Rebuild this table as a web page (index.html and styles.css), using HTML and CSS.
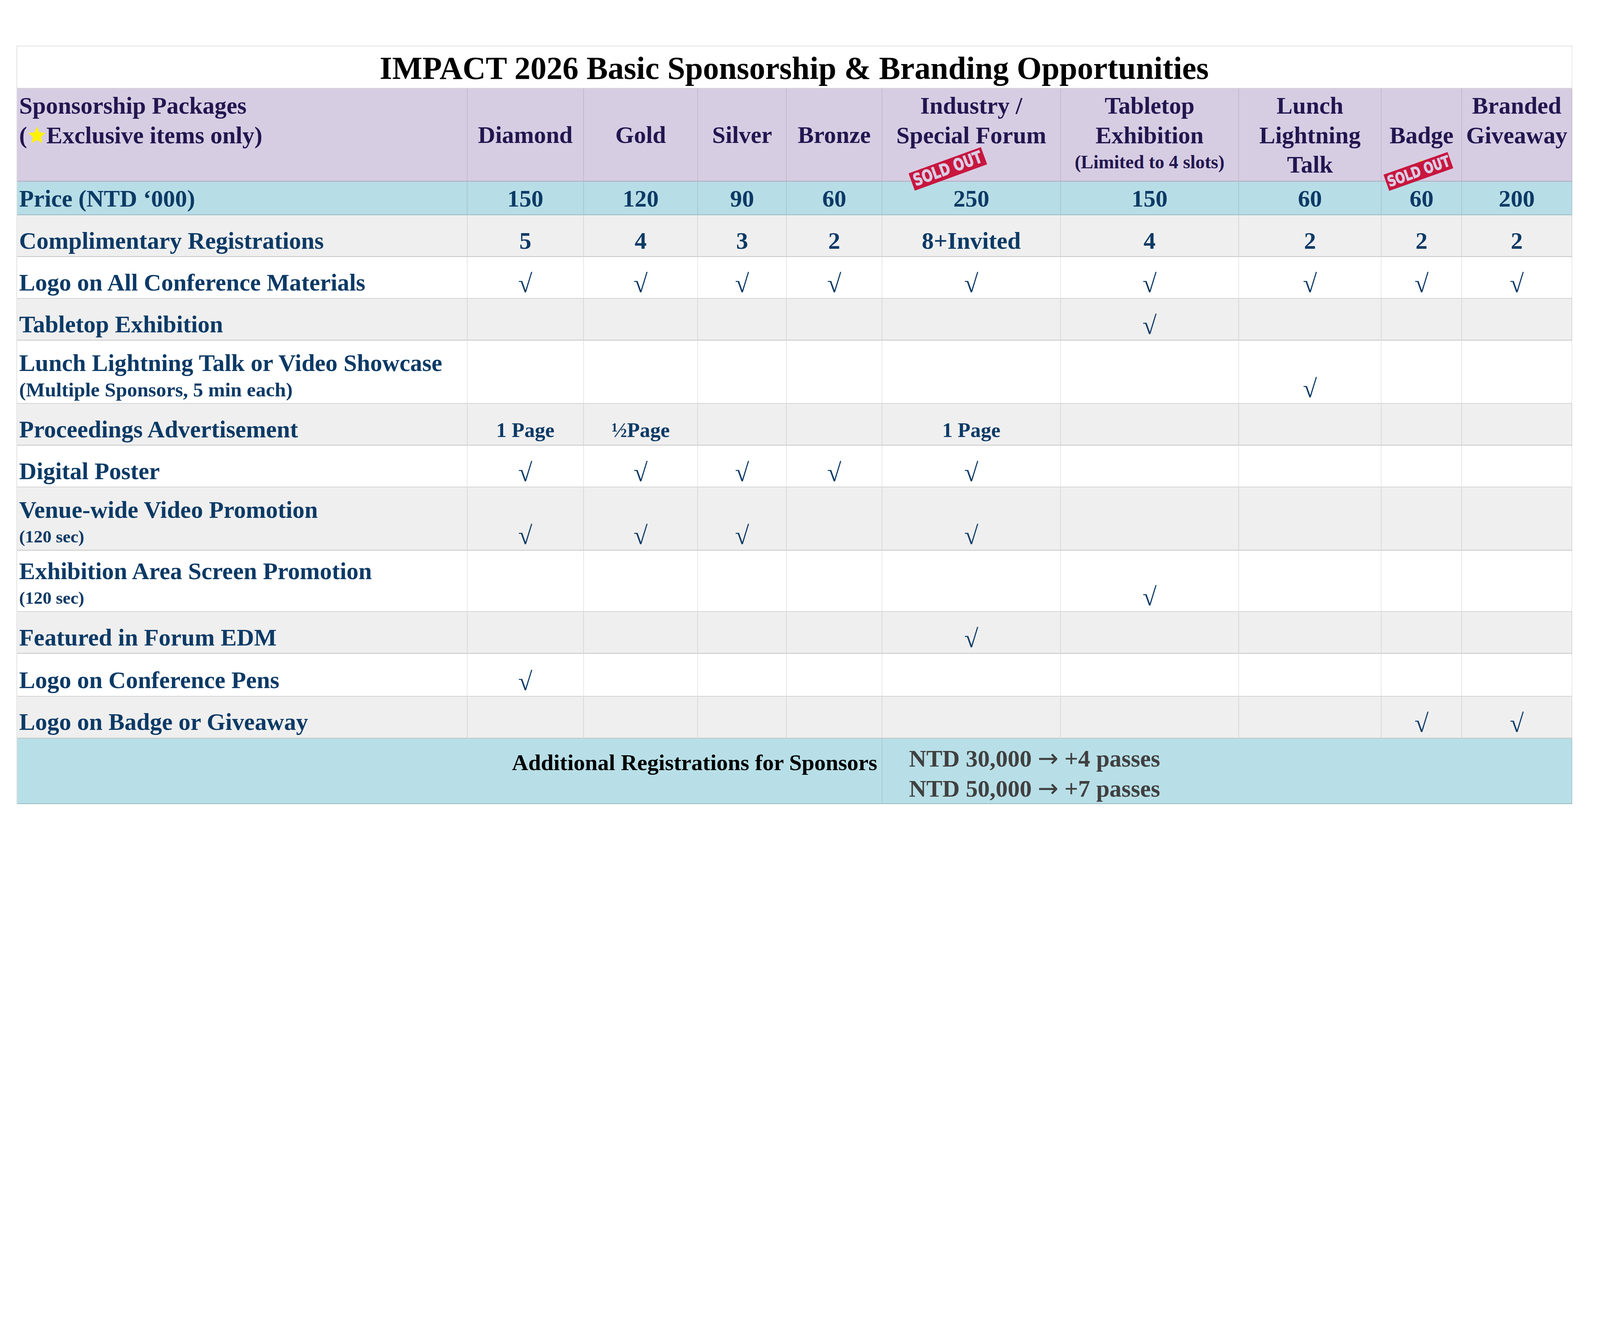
FILE: index.html
```html
<!DOCTYPE html>
<html lang="en">
<head>
<meta charset="utf-8">
<title>IMPACT 2026 Basic Sponsorship &amp; Branding Opportunities</title>
<link rel="stylesheet" href="styles.css">
</head>
<body>
<div class="page">
  <div class="sheet">
    <div class="row white">
      <div class="c title">IMPACT 2026 Basic Sponsorship &amp; Branding Opportunities</div>
    </div>

    <div class="row head">
      <div class="c hd lbl">
        <div class="ln">Sponsorship Packages</div>
        <div class="ln">(<svg class="star" viewBox="0 0 24 24"><path d="M12 1.2l3.15 7.05 7.65.75-5.8 5.1 1.7 7.6L12 17.8l-6.7 3.9 1.7-7.6-5.8-5.1 7.65-.75z"/></svg>Exclusive items only)</div>
      </div>
      <div class="c hd mid"><div class="ln">Diamond</div></div>
      <div class="c hd mid"><div class="ln">Gold</div></div>
      <div class="c hd mid"><div class="ln">Silver</div></div>
      <div class="c hd mid"><div class="ln">Bronze</div></div>
      <div class="c hd">
        <div class="ln">Industry /</div>
        <div class="ln">Special Forum</div>
      </div>
      <div class="c hd">
        <div class="ln">Tabletop</div>
        <div class="ln">Exhibition</div>
        <div class="ln lim">(Limited to 4 slots)</div>
      </div>
      <div class="c hd">
        <div class="ln">Lunch</div>
        <div class="ln">Lightning</div>
        <div class="ln">Talk</div>
      </div>
      <div class="c hd">
        <div class="ln">&nbsp;</div>
        <div class="ln">Badge</div>
        <div class="ln starln"><svg class="star star2" viewBox="0 0 24 24"><path d="M12 1.2l3.15 7.05 7.65.75-5.8 5.1 1.7 7.6L12 17.8l-6.7 3.9 1.7-7.6-5.8-5.1 7.65-.75z"/></svg></div>
      </div>
      <div class="c hd">
        <div class="ln">Branded</div>
        <div class="ln">Giveaway</div>
      </div>
    </div>

    <div class="row blue">
      <div class="c lbl">Price (NTD ‘000)</div>
      <div class="c">150</div>
      <div class="c">120</div>
      <div class="c">90</div>
      <div class="c">60</div>
      <div class="c">250</div>
      <div class="c">150</div>
      <div class="c">60</div>
      <div class="c">60</div>
      <div class="c">200</div>
    </div>

    <div class="row gray">
      <div class="c lbl">Complimentary Registrations</div>
      <div class="c">5</div>
      <div class="c">4</div>
      <div class="c">3</div>
      <div class="c">2</div>
      <div class="c">8+Invited</div>
      <div class="c">4</div>
      <div class="c">2</div>
      <div class="c">2</div>
      <div class="c">2</div>
    </div>

    <div class="row white">
      <div class="c lbl">Logo on All Conference Materials</div>
      <div class="c ck">√</div>
      <div class="c ck">√</div>
      <div class="c ck">√</div>
      <div class="c ck">√</div>
      <div class="c ck">√</div>
      <div class="c ck">√</div>
      <div class="c ck">√</div>
      <div class="c ck">√</div>
      <div class="c ck">√</div>
    </div>

    <div class="row gray">
      <div class="c lbl">Tabletop Exhibition</div>
      <div class="c"></div>
      <div class="c"></div>
      <div class="c"></div>
      <div class="c"></div>
      <div class="c"></div>
      <div class="c ck">√</div>
      <div class="c"></div>
      <div class="c"></div>
      <div class="c"></div>
    </div>

    <div class="row white">
      <div class="c lbl">
        <div class="ln">Lunch Lightning Talk or Video Showcase</div>
        <div class="ln sub">(Multiple Sponsors, 5 min each)</div>
      </div>
      <div class="c"></div>
      <div class="c"></div>
      <div class="c"></div>
      <div class="c"></div>
      <div class="c"></div>
      <div class="c"></div>
      <div class="c ck">√</div>
      <div class="c"></div>
      <div class="c"></div>
    </div>

    <div class="row gray">
      <div class="c lbl">Proceedings Advertisement</div>
      <div class="c sm">1 Page</div>
      <div class="c sm">½Page</div>
      <div class="c"></div>
      <div class="c"></div>
      <div class="c sm">1 Page</div>
      <div class="c"></div>
      <div class="c"></div>
      <div class="c"></div>
      <div class="c"></div>
    </div>

    <div class="row white">
      <div class="c lbl">Digital Poster</div>
      <div class="c ck">√</div>
      <div class="c ck">√</div>
      <div class="c ck">√</div>
      <div class="c ck">√</div>
      <div class="c ck">√</div>
      <div class="c"></div>
      <div class="c"></div>
      <div class="c"></div>
      <div class="c"></div>
    </div>

    <div class="row gray">
      <div class="c lbl">
        <div class="ln">Venue-wide Video Promotion</div>
        <div class="ln sub sec">(120 sec)</div>
      </div>
      <div class="c ck">√</div>
      <div class="c ck">√</div>
      <div class="c ck">√</div>
      <div class="c"></div>
      <div class="c ck">√</div>
      <div class="c"></div>
      <div class="c"></div>
      <div class="c"></div>
      <div class="c"></div>
    </div>

    <div class="row white">
      <div class="c lbl">
        <div class="ln">Exhibition Area Screen Promotion</div>
        <div class="ln sub sec">(120 sec)</div>
      </div>
      <div class="c"></div>
      <div class="c"></div>
      <div class="c"></div>
      <div class="c"></div>
      <div class="c"></div>
      <div class="c ck">√</div>
      <div class="c"></div>
      <div class="c"></div>
      <div class="c"></div>
    </div>

    <div class="row gray">
      <div class="c lbl">Featured in Forum EDM</div>
      <div class="c"></div>
      <div class="c"></div>
      <div class="c"></div>
      <div class="c"></div>
      <div class="c ck">√</div>
      <div class="c"></div>
      <div class="c"></div>
      <div class="c"></div>
      <div class="c"></div>
    </div>

    <div class="row white">
      <div class="c lbl">Logo on Conference Pens</div>
      <div class="c ck">√</div>
      <div class="c"></div>
      <div class="c"></div>
      <div class="c"></div>
      <div class="c"></div>
      <div class="c"></div>
      <div class="c"></div>
      <div class="c"></div>
      <div class="c"></div>
    </div>

    <div class="row gray">
      <div class="c lbl">Logo on Badge or Giveaway</div>
      <div class="c"></div>
      <div class="c"></div>
      <div class="c"></div>
      <div class="c"></div>
      <div class="c"></div>
      <div class="c"></div>
      <div class="c"></div>
      <div class="c ck">√</div>
      <div class="c ck">√</div>
    </div>

    <div class="row foot">
      <div class="c ft1">Additional Registrations for Sponsors</div>
      <div class="c ft2">
        <div class="ln">NTD 30,000 <span class="arr">→</span> +4 passes</div>
        <div class="ln">NTD 50,000 <span class="arr">→</span> +7 passes</div>
      </div>
    </div>

    <div class="sold sold1"><span>SOLD OUT</span></div>
    <div class="sold sold2"><span>SOLD OUT</span></div>
  </div>
</div>
</body>
</html>
```

FILE: styles.css
```css
:root {
  /* one unit = one pixel of the 6000px-wide design */
  --u: calc(100vw / 6000);
}

* {
  box-sizing: border-box;
}

html,
body {
  margin: 0;
  padding: 0;
  background: #ffffff;
}

body {
  font-family: "Liberation Serif", "Times New Roman", serif;
  font-weight: 700;
}

.page {
  padding: calc(172 * var(--u)) 0 0 calc(61 * var(--u));
}

.sheet {
  position: relative;
  display: grid;
  width: calc(5835 * var(--u));
  grid-template-columns:
    calc(1689 * var(--u)) calc(437 * var(--u)) calc(428 * var(--u))
    calc(333 * var(--u)) calc(358 * var(--u)) calc(670 * var(--u))
    calc(667 * var(--u)) calc(536 * var(--u)) calc(301 * var(--u))
    calc(413 * var(--u));
  grid-template-rows:
    calc(158 * var(--u)) calc(348 * var(--u)) calc(126 * var(--u))
    calc(157 * var(--u)) calc(157 * var(--u)) calc(157 * var(--u))
    calc(237 * var(--u)) calc(157 * var(--u)) calc(157 * var(--u))
    calc(237 * var(--u)) calc(230 * var(--u)) calc(157 * var(--u))
    calc(160 * var(--u)) calc(157 * var(--u)) calc(247 * var(--u));
  border-left: calc(3 * var(--u)) solid #e3e3e3;
  border-top: calc(3 * var(--u)) solid #e3e3e3;
}

.row {
  display: contents;
}

.row.white { --bg: #ffffff; }
.row.gray { --bg: #efefef; }
.row.blue { --bg: #b7dde6; }
.row.head { --bg: #d7cde3; }
.row.foot { --bg: #b8dfe7; }

.c {
  background: var(--bg, #ffffff);
  border-right: calc(3 * var(--u)) solid rgba(0, 0, 0, 0.09);
  border-bottom: calc(4 * var(--u)) solid rgba(0, 0, 0, 0.16);
  display: flex;
  flex-direction: column;
  justify-content: flex-end;
  align-items: center;
  padding: 0 0 calc(4 * var(--u)) 0;
  color: #0c3a66;
  font-size: calc(90 * var(--u));
  line-height: calc(108 * var(--u));
  white-space: nowrap;
}

.lbl {
  align-items: flex-start;
  padding-left: calc(8 * var(--u));
}

.sub {
  font-size: calc(75.5 * var(--u));
  line-height: calc(92 * var(--u));
}

.sub.sec {
  font-size: calc(66 * var(--u));
}

.sm {
  font-size: calc(78 * var(--u));
  line-height: calc(100 * var(--u));
}

.ck {
  font-size: calc(96 * var(--u));
  line-height: calc(100 * var(--u));
}

.title {
  grid-column: 1 / -1;
  color: #000000;
  font-size: calc(120 * var(--u));
  line-height: calc(144 * var(--u));
  justify-content: flex-start;
  padding: calc(10 * var(--u)) 0 0 0;
}

.hd {
  color: #22164f;
  justify-content: flex-start;
  padding: calc(9 * var(--u)) 0 0 0;
  line-height: calc(110 * var(--u));
}

.hd.lbl {
  padding-left: calc(8 * var(--u));
}

.hd.mid {
  justify-content: center;
  padding: 0;
}

.lim {
  font-size: calc(70 * var(--u));
  line-height: calc(90 * var(--u));
}

.star {
  width: calc(72 * var(--u));
  height: calc(72 * var(--u));
  vertical-align: calc(-7 * var(--u));
  fill: #fff200;
}

.starln {
  display: flex;
  align-items: center;
  height: calc(110 * var(--u));
}

.star2 {
  width: calc(70 * var(--u));
  height: calc(70 * var(--u));
  margin-top: calc(24 * var(--u));
}

.ft1 {
  grid-column: 1 / 6;
  color: #000000;
  align-items: flex-end;
  justify-content: flex-start;
  font-size: calc(85 * var(--u));
  padding: calc(35 * var(--u)) calc(16 * var(--u)) 0 0;
  line-height: calc(110 * var(--u));
}

.ft2 {
  grid-column: 6 / 11;
  color: #404040;
  align-items: flex-start;
  justify-content: flex-start;
  padding: calc(20 * var(--u)) 0 0 calc(100 * var(--u));
  line-height: calc(110 * var(--u));
}

.arr {
  font-family: "DejaVu Sans", sans-serif;
  font-weight: 400;
  font-size: calc(93 * var(--u));
}

.sold {
  position: absolute;
  z-index: 2;
  background: #c8163f;
  color: #d8cde3;
  font-family: "DejaVu Sans", "Liberation Sans", sans-serif;
  font-weight: 700;
  display: flex;
  align-items: center;
  justify-content: center;
  line-height: 1;
  white-space: nowrap;
}

.sold span {
  display: inline-block;
  transform: scaleX(0.76);
  -webkit-text-stroke: calc(2 * var(--u)) #d8cde3;
}

.sold1 {
  left: calc(3346 * var(--u));
  top: calc(424 * var(--u));
  width: calc(288 * var(--u));
  height: calc(69 * var(--u));
  font-size: calc(62 * var(--u));
  transform: rotate(-20deg);
}

.sold2 {
  left: calc(5128 * var(--u));
  top: calc(436 * var(--u));
  width: calc(255 * var(--u));
  height: calc(64 * var(--u));
  font-size: calc(56 * var(--u));
  transform: rotate(-19.5deg);
}
```
